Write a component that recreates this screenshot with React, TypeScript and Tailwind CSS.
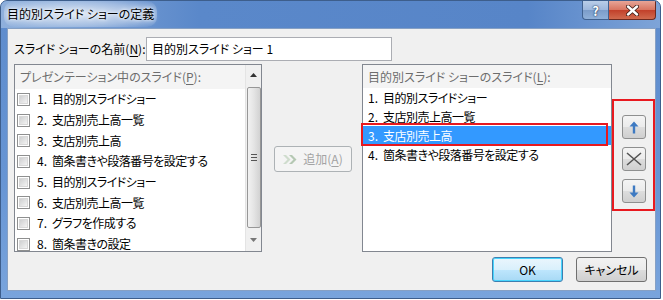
import React from 'react';

const jp = "font-['Noto_Sans_CJK_JP',sans-serif] [font-feature-settings:'palt']";

// アクセスキーの下線
const Key = ({ k }: { k: string }) => (
  <>
    (<span className="underline underline-offset-2">{k}</span>)
  </>
);

const Check = () => (
  <span className="w-[13px] h-[13px] border border-[#8e8f8f] bg-white p-[1px] flex shrink-0">
    <span className="flex-1 border border-[#d8d8d8] bg-[linear-gradient(135deg,#cfd0d1,#f3f3f3)]" />
  </span>
);

// 番号と項目名を分けて表示
const Item = ({ text }: { text: string }) => {
  const [num, ...rest] = text.split(' ');
  return (
    <span className="whitespace-nowrap flex">
      <span>{num}</span>
      <span className="ml-[5px] tracking-[-0.5px]">{rest.join(' ')}</span>
    </span>
  );
};

const leftItems = [
  '1. 目的別スライドショー',
  '2. 支店別売上高一覧',
  '3. 支店別売上高',
  '4. 箇条書きや段落番号を設定する',
  '5. 目的別スライドショー',
  '6. 支店別売上高一覧',
  '7. グラフを作成する',
  '8. 箇条書きの設定',
];

const rightItems = ['1. 目的別スライドショー', '2. 支店別売上高一覧', '3. 支店別売上高', '4. 箇条書きや段落番号を設定する'];

const SideButton = ({ children }: { children: React.ReactNode }) => (
  <button className="w-[24px] h-[24px] shrink-0 rounded-[3px] border border-[#8e8f8f] bg-[linear-gradient(180deg,#f4f4f4_0%,#ebebeb_50%,#dddddd_51%,#cfcfcf_100%)] flex items-center justify-center">
    {children}
  </button>
);

const Scrollbar = () => (
  <div className="w-[16px] shrink-0 h-full flex flex-col items-center bg-[#f0f0f0] border-l border-[#e4e4e4]">
    <div className="h-[20px] flex items-center justify-center">
      <svg width="7" height="4" viewBox="0 0 7 4">
        <path d="M0 4 L3.5 0 L7 4 Z" fill="#333" />
      </svg>
    </div>
    <div className="w-[14px] h-[141px] mt-[2px] rounded-[2px] border border-[#979797] bg-[linear-gradient(90deg,#f2f2f2,#e4e4e4_50%,#d2d2d2)] flex flex-col items-center justify-center gap-[2px]">
      <span className="w-[6px] h-[1px] bg-[#555]" />
      <span className="w-[6px] h-[1px] bg-[#555]" />
      <span className="w-[6px] h-[1px] bg-[#555]" />
    </div>
    <div className="flex-1 flex items-center justify-center">
      <svg width="7" height="4" viewBox="0 0 7 4">
        <path d="M0 0 L7 0 L3.5 4 Z" fill="#777" />
      </svg>
    </div>
  </div>
);

export default function App() {
  return (
    <div className={`w-[663px] h-[300px] bg-white text-[12px] leading-none text-black ${jp}`}>
      <div className="w-[661px] h-[299px] flex flex-col rounded-t-[7px] border border-[#3d5e8c] bg-[linear-gradient(180deg,#5d8bcc_0%,#6795d4_60%,#79a4dc_100%)] overflow-hidden">
        {/* タイトルバー */}
        <div className="h-[27px] flex items-start justify-between pl-[3px] pr-[4px] bg-[linear-gradient(90deg,#8fb0dc_0%,#5a88ca_30%,#5785c8_80%,#7ea4d8_100%)]">
          <div className="h-[26px] flex items-center px-[3px] rounded-[10px] bg-[radial-gradient(ellipse_at_center,rgba(255,255,255,0.75)_0%,rgba(255,255,255,0.35)_60%,rgba(255,255,255,0)_100%)] [text-shadow:0_0_6px_#fff,0_0_3px_#fff]">
            目的別スライド ショーの定義
          </div>
          <div className="flex">
            <div className="w-[27px] h-[19px] rounded-bl-[4px] border border-t-0 border-[#40618f] bg-[linear-gradient(180deg,#b9cde8_0%,#9db7dc_50%,#7b9cc9_51%,#8fb0d9_100%)] flex items-center justify-center text-[13px] font-bold text-white [text-shadow:0_0_2px_#1d3559,0_0_1px_#1d3559]">
              ?
            </div>
            <div className="w-[47px] h-[19px] rounded-br-[4px] border border-l-0 border-t-0 border-[#6d2a20] bg-[linear-gradient(180deg,#e7a597_0%,#d8735f_50%,#c2402a_51%,#d06a4e_100%)] flex items-center justify-center">
              <svg width="13" height="11" viewBox="0 0 13 11">
                <path d="M2 1.5 L11 9.5 M11 1.5 L2 9.5" stroke="#3a1a14" strokeWidth="4" strokeLinecap="round" />
                <path d="M2 1.5 L11 9.5 M11 1.5 L2 9.5" stroke="#fff" strokeWidth="2.4" strokeLinecap="round" />
              </svg>
            </div>
          </div>
        </div>

        {/* クライアント領域 */}
        <div className="ml-[6px] w-[649px] h-[263px] border border-[#86a0c4] bg-[#f0f0f0] pl-[6px] pt-[8px]">
          <div className="flex items-center h-[24px]">
            <div className="w-[132px]">
              スライド ショーの名前<Key k="N" />:
            </div>
            <div className="w-[246px] h-[24px] border border-[#abadb3] bg-white flex items-center pl-[5px]">
              目的別スライド ショー 1
            </div>
          </div>

          <div className="flex items-start mt-[3px] h-[188px]">
            {/* プレゼンテーション中のスライド */}
            <div className="w-[248px] shrink-0 h-[188px] border border-[#828790] bg-white flex">
              <div className="flex-1 overflow-hidden">
                <div className="h-[24px] bg-[#f4f4f4] flex items-center pl-[5px] text-[#6d6d6d]">
                  プレゼンテーション中のスライド<Key k="P" />:
                </div>
                {leftItems.map((t) => (
                  <div key={t} className="h-[20.7px] flex items-center pl-[2px] gap-[7px]">
                    <Check />
                    <Item text={t} />
                  </div>
                ))}
              </div>
              <Scrollbar />
            </div>

            {/* 追加ボタン */}
            <button className="ml-[12px] mt-[82px] w-[78px] shrink-0 h-[26px] rounded-[3px] border border-[#adb2b5] bg-[#f4f4f4] flex items-center justify-center gap-[4px] text-[#a3a3a3]">
              <svg width="16" height="9" viewBox="0 0 16 9">
                <path d="M0 0 L3 0 L7.5 4.5 L3 9 L0 9 L4.5 4.5 Z" fill="#cfdccd" />
                <path d="M6 0 L9 0 L13.5 4.5 L9 9 L6 9 L10.5 4.5 Z" fill="#b5c8b3" />
              </svg>
              <span>
                追加<Key k="A" />
              </span>
            </button>

            {/* 目的別スライド ショーのスライド */}
            <div className="ml-[10px] w-[250px] shrink-0 h-[188px] border border-[#828790] bg-white relative">
              <div className="h-[23px] bg-[#f4f4f4] flex items-center pl-[5px] text-[#6d6d6d]">
                目的別スライド ショーのスライド<Key k="L" />:
              </div>
              {rightItems.map((t, i) => (
                <div
                  key={t}
                  className={`h-[19px] flex items-center pl-[5px] ${i === 2 ? 'bg-[#3399ff] text-white' : ''}`}
                >
                  <Item text={t} />
                </div>
              ))}
              <div className="absolute left-[-2px] top-[58px] w-[247px] h-[23px] border-2 border-[#e8191f]" />
            </div>

            {/* 並べ替えボタン */}
            <div className="mt-[35px] w-[43px] shrink-0 h-[112px] border-2 border-[#e8191f] flex flex-col items-center pt-[14px] gap-[8px]">
              <SideButton>
                <svg width="10" height="13" viewBox="0 0 10 13">
                  <path d="M5 0.5 L9.5 5.5 L6.2 5.5 L6.2 12.5 L3.8 12.5 L3.8 5.5 L0.5 5.5 Z" fill="#3e7ac2" />
                </svg>
              </SideButton>
              <SideButton>
                <svg width="16" height="14" viewBox="0 0 16 14">
                  <path d="M1 1 L15 13 M15 1 L1 13" stroke="#555" strokeWidth="1.6" />
                </svg>
              </SideButton>
              <SideButton>
                <svg width="10" height="13" viewBox="0 0 10 13">
                  <path d="M5 12.5 L9.5 7.5 L6.2 7.5 L6.2 0.5 L3.8 0.5 L3.8 7.5 L0.5 7.5 Z" fill="#3e7ac2" />
                </svg>
              </SideButton>
            </div>
          </div>

          <div className="flex justify-end gap-[13px] mt-[5px] pr-[8px]">
            <button className="w-[71px] h-[25px] rounded-[3px] border border-[#3c7fb1] bg-[linear-gradient(180deg,#eaf6fd_0%,#d9f0fc_50%,#bee6fd_51%,#a7d9f5_100%)] shadow-[inset_0_0_0_1px_#48d5fd] flex items-center justify-center">
              OK
            </button>
            <button className="w-[71px] h-[25px] rounded-[3px] border border-[#707070] bg-[linear-gradient(180deg,#f2f2f2_0%,#ebebeb_50%,#dddddd_51%,#cfcfcf_100%)] flex items-center justify-center">
              キャンセル
            </button>
          </div>
        </div>
      </div>
    </div>
  );
}
